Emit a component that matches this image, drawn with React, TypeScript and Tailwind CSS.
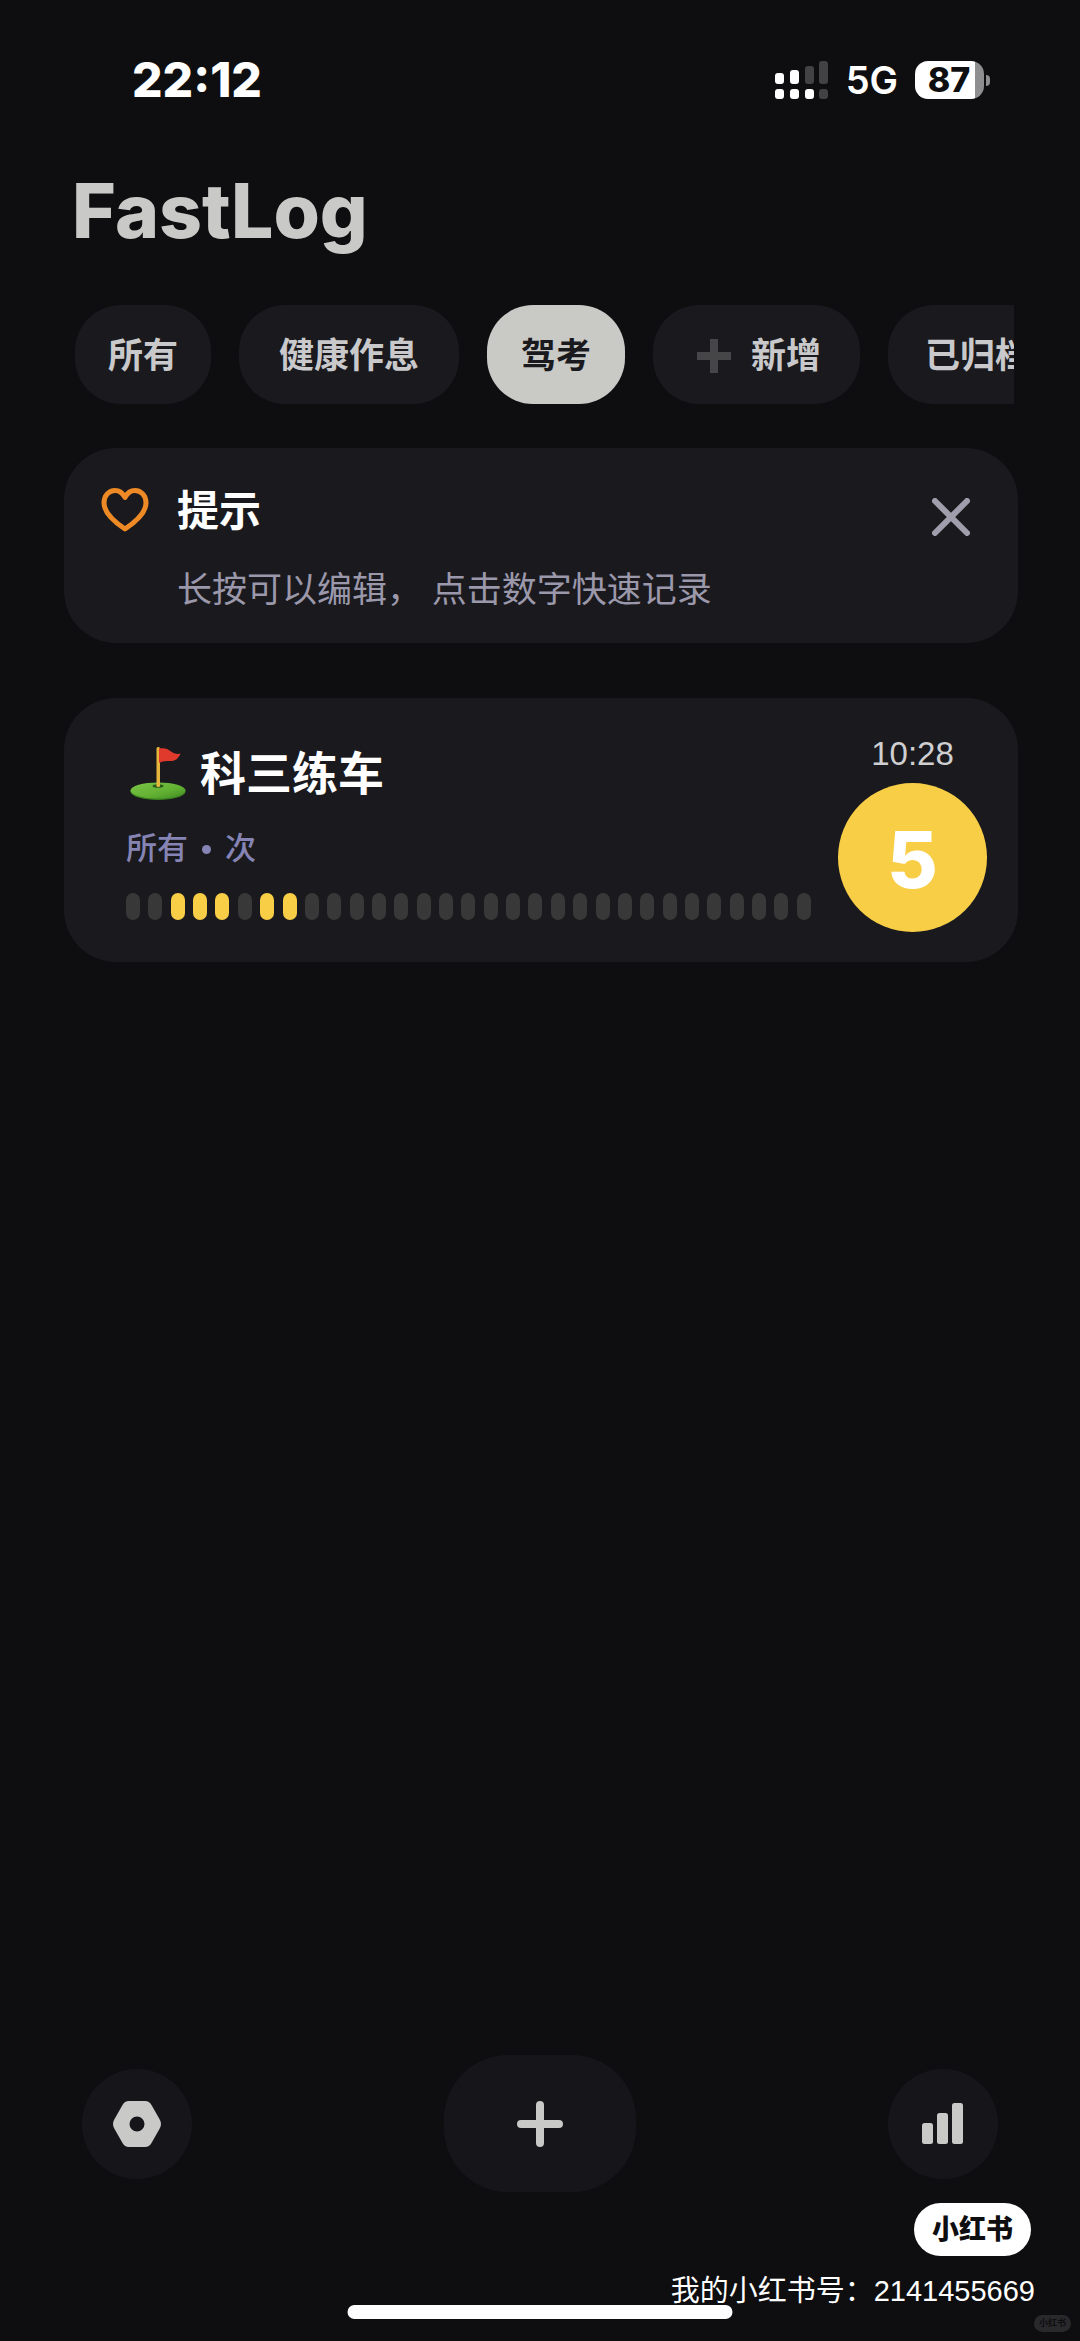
import React from 'react';
import clsx from 'clsx';

const tabs = [
  { name: '所有', padding: 'px-[33px]' },
  { name: '健康作息', padding: 'px-10' },
  { name: '驾考', padding: 'px-[34px]', active: true },
  { name: '新增', padding: 'pl-11 pr-[39px]', add: true },
  { name: '已归档', padding: 'px-[37px]' },
];

const DAYS = 31;
const doneDays = [2, 3, 4, 6, 7];

function StatusBar() {
  return (
    <header className="mt-[52px] flex h-14 items-center justify-between pl-[132px] pr-[90px] font-['Inter',sans-serif] text-white">
      <span className="text-[48px] font-extrabold leading-none">22:12</span>
      <div className="flex items-center">
        <svg width="54" height="38" viewBox="0 0 54 38" aria-hidden="true">
          <g fill="#fff">
            <rect x="0" y="12" width="9" height="11" rx="3" />
            <rect x="15" y="9" width="9" height="14" rx="3" />
            <rect x="0" y="28" width="9" height="10" rx="3" />
            <rect x="15" y="28" width="9" height="10" rx="3" />
            <rect x="30" y="28" width="9" height="10" rx="3" />
          </g>
          <g fill="#424244">
            <rect x="30" y="5" width="9" height="18" rx="3" />
            <rect x="44" y="0" width="9" height="23" rx="3" />
            <rect x="44" y="28" width="9" height="10" rx="3" />
          </g>
        </svg>
        <span className="mx-[17px] text-[38px] font-semibold leading-none">5G</span>
        <div className="flex h-[38px] w-[69px] items-center justify-center rounded-[13px] bg-linear-to-r from-white from-87% to-[#8e8e90] to-87% pr-px text-[34px] font-extrabold leading-none text-[#0e0e10]">
          87
        </div>
        <div className="ml-[2px] h-[11px] w-1 rounded-r-full bg-[#8e8e90]" />
      </div>
    </header>
  );
}

function Tabs() {
  return (
    <nav className="ml-[75px] mr-[66px] mt-[54px] flex gap-7 overflow-x-auto [scrollbar-width:none]">
      {tabs.map((tab) => (
        <button
          key={tab.name}
          className={clsx(
            'flex h-[99px] shrink-0 items-center rounded-[46px] pt-[2px] text-[35px] font-bold leading-none',
            tab.padding,
            tab.active ? 'bg-[#c9c9c6] text-[#1a1a1e]' : 'bg-[#1a1a1e] text-[#c9c9cb]'
          )}
        >
          {tab.add && (
            <svg className="mr-5" width="34" height="34" viewBox="0 0 34 34" aria-hidden="true">
              <path d="M13 0h8v13h13v8H21v13h-8V21H0v-8h13z" fill="#464648" />
            </svg>
          )}
          {tab.name}
        </button>
      ))}
    </nav>
  );
}

function TipCard() {
  return (
    <section className="ml-16 mr-[62px] mt-11 flex items-start rounded-[52px] bg-[#1a1a1e] pb-7 pl-[37px] pr-12 pt-[34px]">
      <svg className="mt-[5px]" width="48" height="46" viewBox="0 0 48 46" fill="none" aria-hidden="true">
        <path
          d="M24 42C15 36 3 27 3 16 3 8.500 8 3.500 14 3.500c4.500 0 8 3 10 7 2-4 5.500-7 10-7 6 0 11 5 11 12.500C45 27 33 36 24 42z"
          stroke="#ee8a26"
          strokeWidth="5"
          strokeLinejoin="round"
        />
      </svg>
      <div className="ml-7 flex-1">
        <h2 className="text-[42px] font-bold leading-[60px] text-white">提示</h2>
        <p className="mt-[23px] text-[35px] leading-[50px] text-[#9a98aa]">长按可以编辑， 点击数字快速记录</p>
      </div>
      <button className="mt-4 h-[38px]" aria-label="关闭">
        <svg width="38" height="38" viewBox="0 0 38 38" stroke="#a09eac" strokeWidth="6" strokeLinecap="round">
          <path d="M3 3l32 32M35 3L3 35" />
        </svg>
      </button>
    </section>
  );
}

function GolfFlag() {
  return (
    <svg width="60" height="60" viewBox="0 0 60 60" aria-hidden="true">
      <defs>
        <linearGradient id="grass" x1="0" y1="0" x2="1" y2="1">
          <stop offset="0" stopColor="#7cc548" />
          <stop offset="0.6" stopColor="#62b032" />
          <stop offset="1" stopColor="#3f8a22" />
        </linearGradient>
      </defs>
      <ellipse cx="32" cy="47.500" rx="27.500" ry="8.500" fill="#39801f" />
      <ellipse cx="32" cy="46.500" rx="27.500" ry="8" fill="url(#grass)" />
      <ellipse cx="32" cy="42" rx="5.500" ry="1.800" fill="#2b5a18" />
      <rect x="30.500" y="3" width="3.500" height="40" rx="1.500" fill="#e6b53c" />
      <path d="M33 4.500c5-1 9 0 12 3 3 2 6 3 9.500 2-2 5-5 7.500-10 7.500-4 0-8 0-11.500 2z" fill="#e03a2c" />
    </svg>
  );
}

function HabitCard() {
  return (
    <section className="ml-16 mr-[62px] mt-[55px] flex gap-[27px] rounded-[52px] bg-[#1a1a1e] pl-[62px] pr-[31px]">
      <div className="flex-1 pb-[42px] pt-[46px]">
        <div className="flex items-center">
          <GolfFlag />
          <h2 className="ml-[14px] text-[46px] font-bold leading-[60px] text-white">科三练车</h2>
        </div>
        <p className="mt-[25px] flex items-center text-[31px] font-medium leading-10 text-[#8584b4]">
          所有
          <span className="mx-[14px] size-[9px] rounded-full bg-[#8584b4]" />
          次
        </p>
        <div className="mt-6 flex justify-between">
          {Array.from({ length: DAYS }, (_, i) => (
            <span
              key={i}
              className={clsx('h-[27px] w-[14px] rounded-full', doneDays.includes(i) ? 'bg-[#f8ce46]' : 'bg-[#383838]')}
            />
          ))}
        </div>
      </div>
      <div className="flex flex-col items-center pt-9">
        <time className="font-['Liberation_Sans',sans-serif] text-[33px] leading-10 text-[#cfcfd2]">10:28</time>
        <button className="mt-[9px] size-[149px] rounded-full bg-[#f8ce46] pt-1 font-['Inter',sans-serif] text-[78px] font-extrabold leading-none text-white">
          5
        </button>
      </div>
    </section>
  );
}

function BottomNav() {
  return (
    <nav className="mt-auto flex items-center justify-between px-[82px]">
      <button className="flex size-[110px] items-center justify-center rounded-full bg-[#16161a]" aria-label="设置">
        <svg width="48" height="46" viewBox="0 0 48 46">
          <path
            fillRule="evenodd"
            fill="#c9c9c8"
            d="M16 0h16c3 0 5 1.500 6.500 4l8.500 15c1.300 2.500 1.300 5.500 0 8l-8.500 15c-1.500 2.500-3.500 4-6.500 4H16c-3 0-5-1.500-6.500-4L1 27c-1.300-2.500-1.300-5.500 0-8L9.500 4C11 1.500 13 0 16 0zm8 15.500a7.500 7.500 0 100 15 7.500 7.500 0 000-15z"
          />
        </svg>
      </button>
      <button className="flex h-[137px] w-48 items-center justify-center rounded-[64px] bg-[#16161a]" aria-label="添加">
        <svg width="46" height="46" viewBox="0 0 46 46" stroke="#c9c9c8" strokeWidth="8" strokeLinecap="round">
          <path d="M23 4v38M4 23h38" />
        </svg>
      </button>
      <button className="flex size-[110px] items-center justify-center rounded-full bg-[#16161a]" aria-label="统计">
        <svg width="42" height="41" viewBox="0 0 42 41" fill="#c9c9c8">
          <rect x="0" y="20" width="11" height="21" rx="2.500" />
          <rect x="15" y="10" width="11" height="31" rx="2.500" />
          <rect x="30" y="0" width="11" height="41" rx="2.500" />
        </svg>
      </button>
    </nav>
  );
}

export default function App() {
  return (
    <main className="relative flex min-h-screen flex-col overflow-hidden bg-[#0e0e10] font-['Liberation_Sans','Noto_Sans_CJK_SC',sans-serif]">
      <StatusBar />
      <h1 className="ml-[72px] mt-[63px] font-['Inter',sans-serif] text-[75px] font-extrabold leading-[80px] text-[#c9c9c7]">
        FastLog
      </h1>
      <Tabs />
      <TipCard />
      <HabitCard />
      <BottomNav />
      <footer className="mt-[11px] flex flex-col items-end pb-[31px] pr-[45px] text-white">
        <span className="mr-1 flex h-[53px] items-center rounded-full bg-white px-[18px] pt-[2px] text-[27px] font-black leading-none text-[#0e0e10]">
          小红书
        </span>
        <p className="mt-4 text-[29px] leading-[38px]">我的小红书号：2141455669</p>
      </footer>
      <div className="absolute bottom-[22px] left-1/2 h-[14px] w-[385px] -translate-x-1/2 rounded-full bg-white" />
      <span className="absolute bottom-[9px] right-[9px] flex h-[17px] items-center rounded-full bg-[#29292b] px-[5px] text-[9px] font-bold leading-none text-[#0e0e10]">
        小红书
      </span>
    </main>
  );
}
